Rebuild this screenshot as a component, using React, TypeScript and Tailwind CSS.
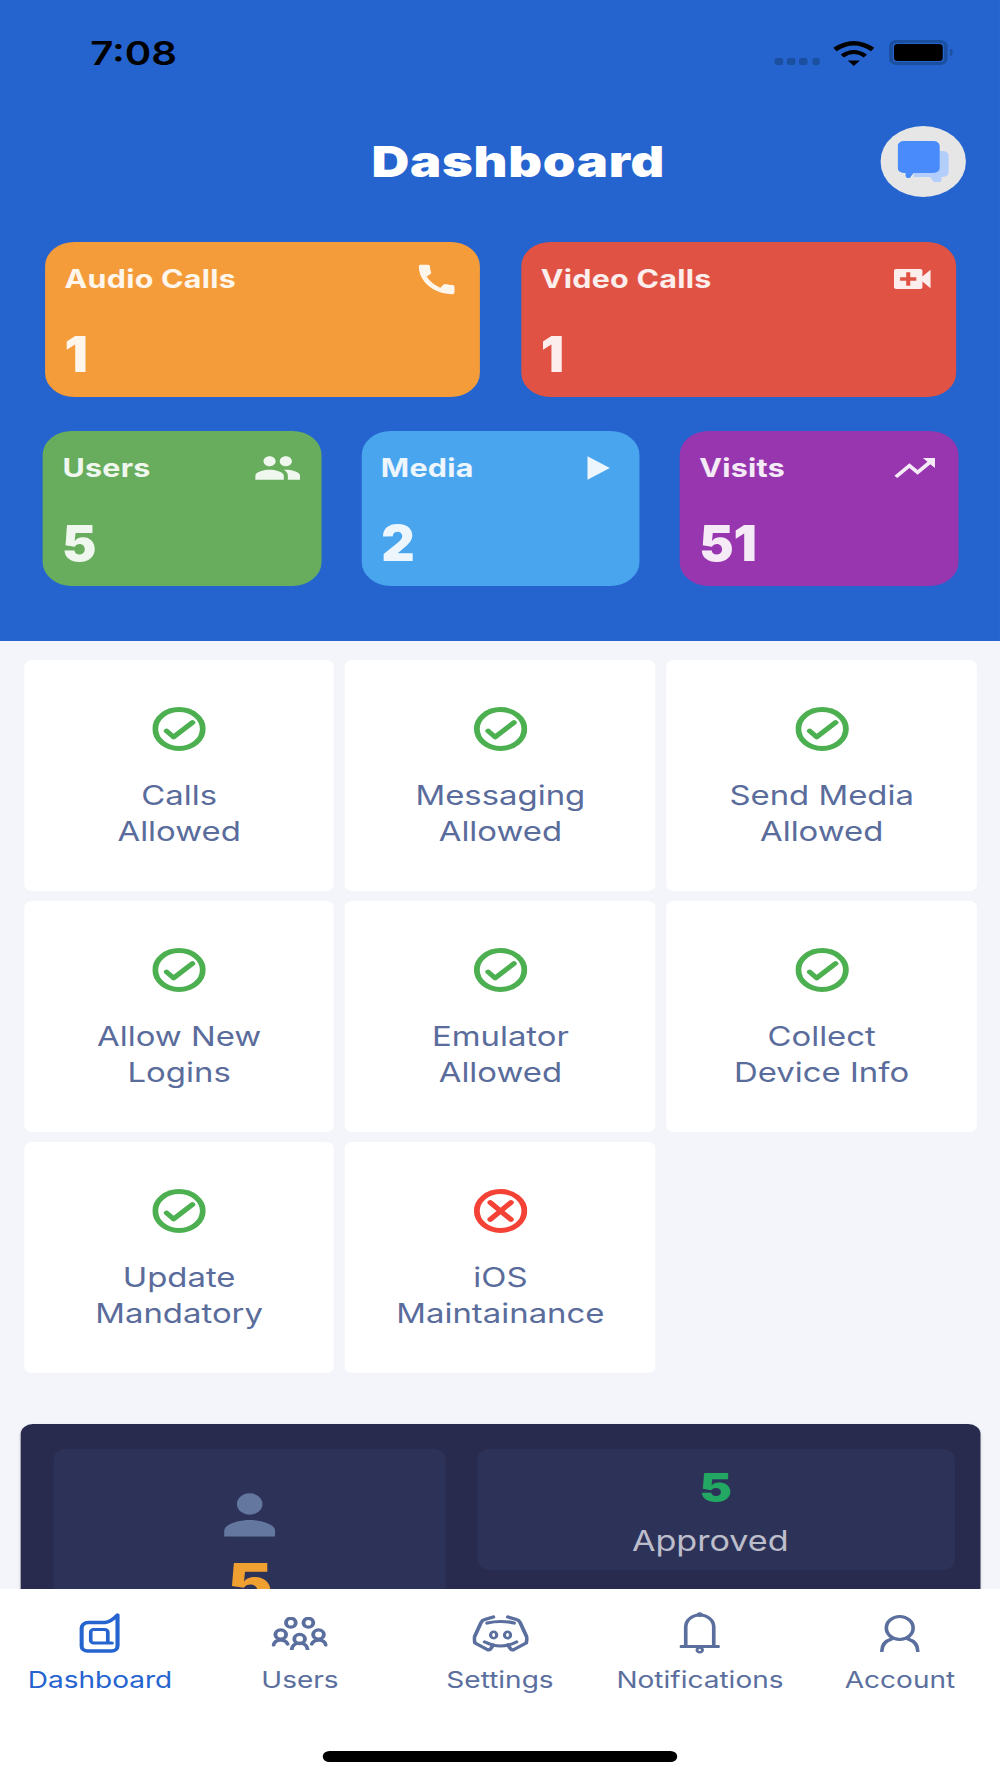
import React from 'react';
import { MdCall, MdPeople, MdPlayArrow, MdTrendingUp, MdVideoCall } from 'react-icons/md';

// the shot is a 375pt phone layout stretched wider than tall, so the page is laid out
// at 821px and widened as a whole
const topCards = [
  { label: 'Audio Calls', value: '1', bg: 'bg-[#f49b3a]', icon: <MdCall className="h-[39px] w-[39px]" /> },
  { label: 'Video Calls', value: '1', bg: 'bg-[#e05243]', icon: <MdVideoCall className="h-[40px] w-[40px]" /> },
];

const smallCards = [
  { label: 'Users', value: '5', bg: 'bg-[#68ad5d]', icon: <MdPeople className="h-[40px] w-[40px]" /> },
  { label: 'Media', value: '2', bg: 'bg-[#4aa5ef]', icon: <MdPlayArrow className="h-[40px] w-[40px]" /> },
  { label: 'Visits', value: '51', bg: 'bg-[#9836af]', icon: <MdTrendingUp className="h-[40px] w-[40px]" /> },
];

const flags = [
  { top: 'Calls', bottom: 'Allowed', ok: true },
  { top: 'Messaging', bottom: 'Allowed', ok: true },
  { top: 'Send Media', bottom: 'Allowed', ok: true },
  { top: 'Allow New', bottom: 'Logins', ok: true },
  { top: 'Emulator', bottom: 'Allowed', ok: true },
  { top: 'Collect', bottom: 'Device Info', ok: true },
  { top: 'Update', bottom: 'Mandatory', ok: true },
  { top: 'iOS', bottom: 'Maintainance', ok: false },
];

function StatCard({ label, value, bg, icon }: { label: string; value: string; bg: string; icon: React.ReactNode }) {
  return (
    <div className={`${bg} flex h-[155px] flex-col justify-between rounded-[24px] px-[16px] pt-[19px] pb-[18px] text-white/90`}>
      <div className="flex items-start justify-between">
        <span className="text-[25px] leading-[36px] font-bold tracking-[0.2px]">{label}</span>
        <span className="flex h-[36px] items-center">{icon}</span>
      </div>
      <span className="origin-left scale-x-[0.85] self-start text-[50px] leading-[50px] font-black">{value}</span>
    </div>
  );
}

function FlagIcon({ ok }: { ok: boolean }) {
  return (
    <svg width="44" height="44" viewBox="0 0 44 44" fill="none" strokeLinecap="round" strokeLinejoin="round">
      <circle cx="22" cy="22" r="19.5" strokeWidth="4.8" stroke={ok ? '#4caf50' : '#f44336'} />
      {ok ? (
        <path d="M11.8 24 L17.5 30 L33 15.5" stroke="#4caf50" strokeWidth="4.6" />
      ) : (
        <path d="M13.5 13.5 L30.5 30.5 M30.5 13.5 L13.5 30.5" stroke="#f44336" strokeWidth="4.6" />
      )}
    </svg>
  );
}

function StatusBar() {
  return (
    <div className="flex h-[126px] items-start justify-between pt-[31px] pr-[39px] pl-[74px]">
      <span className="text-[33px] leading-[44px] font-semibold text-black">7:08</span>
      <div className="flex items-start pt-[9px]">
        <div className="mt-[18px] mr-[11px] flex gap-[3.6px]">
          {[0, 1, 2, 3].map((i) => (
            <span key={i} className="h-[6.5px] w-[6.5px] rounded-[2px] bg-[#1b4f9f]" />
          ))}
        </div>
        <svg width="34" height="26" viewBox="0 0 34 26" fill="none" stroke="#000" className="mr-[12px]">
          <path d="M1.5 9.5 Q17 -3 32.5 9.5" strokeWidth="4.4" />
          <path d="M7.5 16 Q17 8 26.5 16" strokeWidth="4" />
          <path d="M12 20.5 H22 L17 26 Z" fill="#000" stroke="none" />
        </svg>
        <div className="flex items-center">
          <div className="flex h-[25px] w-[48px] items-center justify-center rounded-[6px] border-[3px] border-[#1b4f9f]">
            <span className="h-[17px] w-[40px] rounded-[3px] bg-black" />
          </div>
          <span className="ml-[1.5px] h-[7px] w-[2.5px] rounded-r-[2px] bg-[#1b4f9f]" />
        </div>
      </div>
    </div>
  );
}

function DashboardIcon() {
  return (
    <svg width="33.6" height="40" viewBox="0 0 33.6 40" fill="none" stroke="#2563cf" strokeWidth="3.4" strokeLinejoin="round">
      <path d="M31.5 2 V33 a5 5 0 0 1 -5 5 H7 a5 5 0 0 1 -5 -5 V15 a5.5 5.5 0 0 1 5.5 -5.5 H21 Q26 9 31.5 2 Z" />
      <path d="M12 16.5 H21 a2.5 2.5 0 0 1 2.5 2.5 V30 H27 H12 a2.5 2.5 0 0 1 -2.5 -2.5 V19 a2.5 2.5 0 0 1 2.5 -2.5 Z" strokeWidth="3" />
    </svg>
  );
}

function UsersIcon() {
  return (
    <svg width="46" height="33" viewBox="0 0 46 33" fill="none" stroke="#5b6f9e" strokeWidth="3.2">
      <ellipse cx="15.8" cy="5.7" rx="4" ry="4.4" />
      <ellipse cx="30.2" cy="5.7" rx="4" ry="4.4" />
      <ellipse cx="7.5" cy="17.5" rx="4.4" ry="4.6" />
      <ellipse cx="23" cy="22" rx="4.4" ry="4.6" />
      <ellipse cx="38.5" cy="17.5" rx="4.4" ry="4.6" />
      <path d="M1.6 28 a6 6 0 0 1 11.5 -1 M16.5 32.5 a6.5 6.5 0 0 1 13 0 M33 27 a6 6 0 0 1 11.5 1" strokeLinecap="round" />
    </svg>
  );
}

function SettingsIcon() {
  return (
    <svg width="46" height="37" viewBox="0 0 46 37" fill="none" stroke="#5b6f9e" strokeWidth="3.2" strokeLinecap="round" strokeLinejoin="round">
      <path d="M17 2 L10 4.5 Q8 5 7 7.5 L1.5 22 Q1 25 2 28 L12 34.5 Q14 35.5 15 33.5 L17 30" />
      <path d="M29 2 L36 4.5 Q38 5 39 7.5 L44.5 22 Q45 25 44 28 L34 34.5 Q32 35.5 31 33.5 L29 30" />
      <path d="M12 8 Q23 5 34 8" />
      <path d="M10 27 Q23 35 36 27" />
      <ellipse cx="17.3" cy="20" rx="2.5" ry="3.3" strokeWidth="2.6" />
      <ellipse cx="28.7" cy="20" rx="2.5" ry="3.3" strokeWidth="2.6" />
    </svg>
  );
}

function BellIcon() {
  return (
    <svg width="33" height="42" viewBox="0 0 33 42" fill="none" stroke="#5b6f9e" strokeWidth="3">
      <path d="M5 34 V15 a11.5 12 0 0 1 23 0 V34" />
      <path d="M1 34.5 H32" strokeLinecap="round" />
      <circle cx="16.5" cy="2.6" r="2.4" fill="#5b6f9e" stroke="none" />
      <circle cx="16.5" cy="38" r="2.3" strokeWidth="2.4" />
    </svg>
  );
}

function AccountIcon() {
  return (
    <svg width="34" height="37" viewBox="0 0 34 37" fill="none" stroke="#5b6f9e" strokeWidth="3" strokeLinecap="round">
      <ellipse cx="16.7" cy="13" rx="11" ry="11.5" />
      <path d="M2 36 C2 29 6 25.5 10 24 M31.5 36 C31.5 29 27.5 25.5 23.5 24" />
    </svg>
  );
}

const tabs = [
  { label: 'Dashboard', icon: <DashboardIcon />, active: true },
  { label: 'Users', icon: <UsersIcon />, active: false },
  { label: 'Settings', icon: <SettingsIcon />, active: false },
  { label: 'Notifications', icon: <BellIcon />, active: false },
  { label: 'Account', icon: <AccountIcon />, active: false },
];

export default function App() {
  return (
    <div
      className="flex h-[1778px] w-[821px] origin-top-left scale-x-[1.218] flex-col overflow-hidden bg-[#f3f5fa]"
      style={{ fontFamily: 'Inter, sans-serif' }}
    >
      <div className="h-[641px] shrink-0 bg-[#2564cf]">
        <StatusBar />

        <div className="flex h-[71px] items-center pr-[28px]">
          <h1 className="ml-[305px] flex-1 text-[43px] leading-[71px] font-black tracking-[0.6px] text-white">Dashboard</h1>
          <div className="flex h-[71px] w-[70px] items-center justify-center rounded-full bg-[#e6e6e6]">
            <svg width="42" height="41" viewBox="0 0 42 41">
              <path d="M13 10 H37 a5 5 0 0 1 5 5 V31 a5 5 0 0 1 -5 5 H36 V39 a2 2 0 0 1 -2 2 H30 L26.5 36 H13 Z" fill="#b3cefb" />
              <path d="M5 0 H29.5 a5 5 0 0 1 5 5 V27 a5 5 0 0 1 -5 5 H13 L10 37 H8.5 a2 2 0 0 1 -2 -2 V32 H5 a5 5 0 0 1 -5 -5 V5 a5 5 0 0 1 5 -5 Z" fill="#4a8bfb" />
            </svg>
          </div>
        </div>

        <div className="mt-[45px] grid grid-cols-2 gap-[34px] pr-[36px] pl-[37px]">
          {topCards.map((card) => (
            <StatCard key={card.label} {...card} />
          ))}
        </div>
        <div className="mt-[34px] grid grid-cols-3 gap-[33px] pr-[34.5px] pl-[35.3px]">
          {smallCards.map((card) => (
            <StatCard key={card.label} {...card} />
          ))}
        </div>
      </div>

      <div className="h-[948px] shrink-0 overflow-hidden pt-[19px]">
        <div className="grid grid-cols-3 gap-x-[9px] gap-y-[10px] pr-[19px] pl-[19.7px]">
          {flags.map((flag) => (
            <div key={flag.top} className="flex h-[231px] flex-col items-center rounded-[6px] bg-white pt-[47px]">
              <FlagIcon ok={flag.ok} />
              <p className="mt-[27px] text-center text-[27px] leading-[35.5px] text-[#5a6c9b]">
                {flag.top}
                <br />
                {flag.bottom}
              </p>
            </div>
          ))}
        </div>

        <div className="mt-[51px] mr-[16px] ml-[17.2px] flex h-[300px] gap-[25.5px] rounded-t-[10px] bg-[#282b4e] pt-[25px] pr-[21.5px] pl-[27px] shadow-sm">
          <div className="flex w-[322px] flex-col items-center rounded-t-[10px] bg-[#2d3259] pt-[44px]">
            <svg width="42" height="44" viewBox="0 0 42 44" fill="#64789f">
              <ellipse cx="21" cy="11" rx="10.5" ry="10.7" />
              <path d="M0 43.5 V38 C0 31 12 27 21 27 S42 31 42 38 V43.5 Z" />
            </svg>
            <span className="mt-[19px] text-[56px] leading-[56px] font-black text-[#f0a030]">5</span>
          </div>
          <div className="flex h-[121px] flex-1 flex-col items-center rounded-[10px] bg-[#2d3259] pt-[16px] pr-[9px]">
            <span className="ml-[9px] text-[40px] leading-[46px] font-black text-[#22a862]">5</span>
            <span className="mt-[12px] text-[28px] leading-[36px] text-white/70">Approved</span>
          </div>
        </div>
      </div>

      <div className="relative flex-1 bg-white pt-[22px]">
        <div className="flex">
          {tabs.map((tab) => (
            <div key={tab.label} className="flex flex-1 flex-col items-center">
              <div className="flex h-[44px] items-center">{tab.icon}</div>
              <span className={`mt-[11px] text-[23px] leading-[28px] ${tab.active ? 'text-[#2563cf]' : 'text-[#5b6f9e]'}`}>
                {tab.label}
              </span>
            </div>
          ))}
        </div>
        <div className="mx-auto mt-[57px] h-[11px] w-[291px] rounded-full bg-black" />
      </div>
    </div>
  );
}
